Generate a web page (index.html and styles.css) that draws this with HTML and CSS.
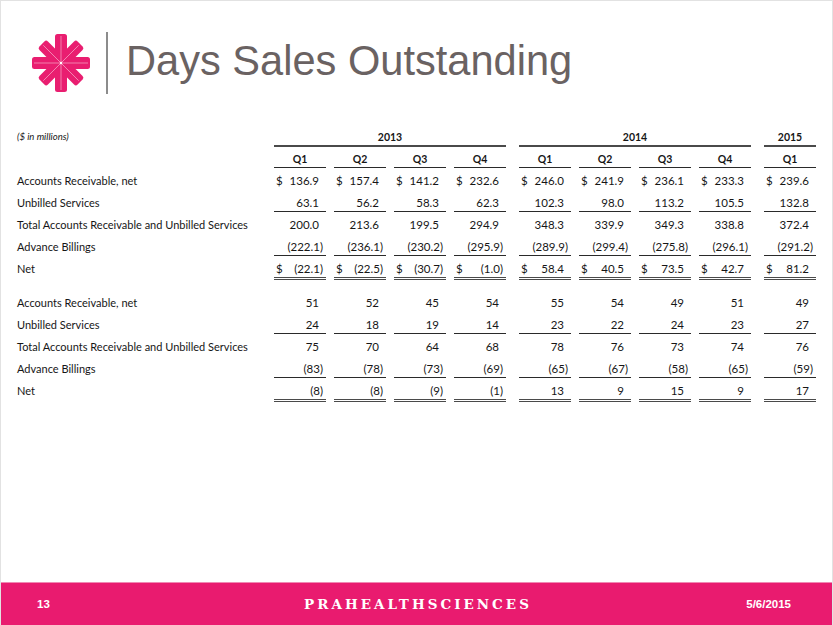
FILE: index.html
```html
<!DOCTYPE html>
<html lang="en">
<head>
<meta charset="utf-8">
<title>Days Sales Outstanding</title>
<link rel="stylesheet" href="styles.css">
</head>
<body>
<div class="slide">
  <header class="head">
    <svg class="logo" viewBox="0 0 58 58" aria-hidden="true">
      <g fill="#e91e70">
        <rect x="23" y="0" width="12" height="58" rx="2.5"/>
        <rect x="23" y="0" width="12" height="58" rx="2.5" transform="rotate(90 29 29)"/>
        <rect x="23" y="2" width="12" height="54" rx="2.5" transform="rotate(45 29 29)"/>
        <rect x="23" y="2" width="12" height="54" rx="2.5" transform="rotate(-45 29 29)"/>
      </g>
      <g stroke="#ffffff" stroke-opacity="0.55" stroke-width="0.8">
        <line x1="29" y1="2" x2="29" y2="56"/>
        <line x1="2" y1="29" x2="56" y2="29"/>
        <line x1="29" y1="4" x2="29" y2="54" transform="rotate(45 29 29)"/>
        <line x1="29" y1="4" x2="29" y2="54" transform="rotate(-45 29 29)"/>
      </g>
      <circle cx="29" cy="29" r="1.2" fill="#ffffff"/>
    </svg>
    <div class="divider"></div>
    <h1 class="title">Days Sales Outstanding</h1>
  </header>

  <main class="tables">
    <div class="row">
      <div class="label note">($ in millions)</div>
      <div class="cell hd span4 uy">2013</div>
      <div class="cell hd span4 g uy">2014</div>
      <div class="cell hd g uy">2015</div>
    </div>
    <div class="row">
      <div class="label"></div>
      <div class="cell hd ul">Q1</div>
      <div class="cell hd ul">Q2</div>
      <div class="cell hd ul">Q3</div>
      <div class="cell hd ul">Q4</div>
      <div class="cell hd ul g">Q1</div>
      <div class="cell hd ul">Q2</div>
      <div class="cell hd ul">Q3</div>
      <div class="cell hd ul">Q4</div>
      <div class="cell hd ul g">Q1</div>
    </div>

    <div class="row">
      <div class="label">Accounts Receivable, net</div>
      <div class="cell"><span class="cur">$</span><span class="num">136.9</span></div>
      <div class="cell"><span class="cur">$</span><span class="num">157.4</span></div>
      <div class="cell"><span class="cur">$</span><span class="num">141.2</span></div>
      <div class="cell"><span class="cur">$</span><span class="num">232.6</span></div>
      <div class="cell g"><span class="cur">$</span><span class="num">246.0</span></div>
      <div class="cell"><span class="cur">$</span><span class="num">241.9</span></div>
      <div class="cell"><span class="cur">$</span><span class="num">236.1</span></div>
      <div class="cell"><span class="cur">$</span><span class="num">233.3</span></div>
      <div class="cell g"><span class="cur">$</span><span class="num">239.6</span></div>
    </div>
    <div class="row">
      <div class="label">Unbilled Services</div>
      <div class="cell ul"><span class="num">63.1</span></div>
      <div class="cell ul"><span class="num">56.2</span></div>
      <div class="cell ul"><span class="num">58.3</span></div>
      <div class="cell ul"><span class="num">62.3</span></div>
      <div class="cell ul g"><span class="num">102.3</span></div>
      <div class="cell ul"><span class="num">98.0</span></div>
      <div class="cell ul"><span class="num">113.2</span></div>
      <div class="cell ul"><span class="num">105.5</span></div>
      <div class="cell ul g"><span class="num">132.8</span></div>
    </div>
    <div class="row">
      <div class="label">Total Accounts Receivable and Unbilled Services</div>
      <div class="cell"><span class="num">200.0</span></div>
      <div class="cell"><span class="num">213.6</span></div>
      <div class="cell"><span class="num">199.5</span></div>
      <div class="cell"><span class="num">294.9</span></div>
      <div class="cell g"><span class="num">348.3</span></div>
      <div class="cell"><span class="num">339.9</span></div>
      <div class="cell"><span class="num">349.3</span></div>
      <div class="cell"><span class="num">338.8</span></div>
      <div class="cell g"><span class="num">372.4</span></div>
    </div>
    <div class="row">
      <div class="label">Advance Billings</div>
      <div class="cell ul"><span class="num neg">(222.1)</span></div>
      <div class="cell ul"><span class="num neg">(236.1)</span></div>
      <div class="cell ul"><span class="num neg">(230.2)</span></div>
      <div class="cell ul"><span class="num neg">(295.9)</span></div>
      <div class="cell ul g"><span class="num neg">(289.9)</span></div>
      <div class="cell ul"><span class="num neg">(299.4)</span></div>
      <div class="cell ul"><span class="num neg">(275.8)</span></div>
      <div class="cell ul"><span class="num neg">(296.1)</span></div>
      <div class="cell ul g"><span class="num neg">(291.2)</span></div>
    </div>
    <div class="row">
      <div class="label">Net</div>
      <div class="cell dbl"><span class="cur">$</span><span class="num neg">(22.1)</span></div>
      <div class="cell dbl"><span class="cur">$</span><span class="num neg">(22.5)</span></div>
      <div class="cell dbl"><span class="cur">$</span><span class="num neg">(30.7)</span></div>
      <div class="cell dbl"><span class="cur">$</span><span class="num neg">(1.0)</span></div>
      <div class="cell dbl g"><span class="cur">$</span><span class="num">58.4</span></div>
      <div class="cell dbl"><span class="cur">$</span><span class="num">40.5</span></div>
      <div class="cell dbl"><span class="cur">$</span><span class="num">73.5</span></div>
      <div class="cell dbl"><span class="cur">$</span><span class="num">42.7</span></div>
      <div class="cell dbl g"><span class="cur">$</span><span class="num">81.2</span></div>
    </div>

    <div class="row first">
      <div class="label">Accounts Receivable, net</div>
      <div class="cell"><span class="num">51</span></div>
      <div class="cell"><span class="num">52</span></div>
      <div class="cell"><span class="num">45</span></div>
      <div class="cell"><span class="num">54</span></div>
      <div class="cell g"><span class="num">55</span></div>
      <div class="cell"><span class="num">54</span></div>
      <div class="cell"><span class="num">49</span></div>
      <div class="cell"><span class="num">51</span></div>
      <div class="cell g"><span class="num">49</span></div>
    </div>
    <div class="row">
      <div class="label">Unbilled Services</div>
      <div class="cell ul"><span class="num">24</span></div>
      <div class="cell ul"><span class="num">18</span></div>
      <div class="cell ul"><span class="num">19</span></div>
      <div class="cell ul"><span class="num">14</span></div>
      <div class="cell ul g"><span class="num">23</span></div>
      <div class="cell ul"><span class="num">22</span></div>
      <div class="cell ul"><span class="num">24</span></div>
      <div class="cell ul"><span class="num">23</span></div>
      <div class="cell ul g"><span class="num">27</span></div>
    </div>
    <div class="row">
      <div class="label">Total Accounts Receivable and Unbilled Services</div>
      <div class="cell"><span class="num">75</span></div>
      <div class="cell"><span class="num">70</span></div>
      <div class="cell"><span class="num">64</span></div>
      <div class="cell"><span class="num">68</span></div>
      <div class="cell g"><span class="num">78</span></div>
      <div class="cell"><span class="num">76</span></div>
      <div class="cell"><span class="num">73</span></div>
      <div class="cell"><span class="num">74</span></div>
      <div class="cell g"><span class="num">76</span></div>
    </div>
    <div class="row">
      <div class="label">Advance Billings</div>
      <div class="cell ul"><span class="num neg">(83)</span></div>
      <div class="cell ul"><span class="num neg">(78)</span></div>
      <div class="cell ul"><span class="num neg">(73)</span></div>
      <div class="cell ul"><span class="num neg">(69)</span></div>
      <div class="cell ul g"><span class="num neg">(65)</span></div>
      <div class="cell ul"><span class="num neg">(67)</span></div>
      <div class="cell ul"><span class="num neg">(58)</span></div>
      <div class="cell ul"><span class="num neg">(65)</span></div>
      <div class="cell ul g"><span class="num neg">(59)</span></div>
    </div>
    <div class="row">
      <div class="label">Net</div>
      <div class="cell dbl"><span class="num neg">(8)</span></div>
      <div class="cell dbl"><span class="num neg">(8)</span></div>
      <div class="cell dbl"><span class="num neg">(9)</span></div>
      <div class="cell dbl"><span class="num neg">(1)</span></div>
      <div class="cell dbl g"><span class="num">13</span></div>
      <div class="cell dbl"><span class="num">9</span></div>
      <div class="cell dbl"><span class="num">15</span></div>
      <div class="cell dbl"><span class="num">9</span></div>
      <div class="cell dbl g"><span class="num">17</span></div>
    </div>
  </main>

  <footer class="foot">
    <span class="page">13</span>
    <span class="brand">PRAHEALTHSCIENCES</span>
    <span class="date">5/6/2015</span>
  </footer>
</div>
</body>
</html>
```

FILE: styles.css
```css
body {
  margin: 0;
  background: #ffffff;
}

.slide {
  width: 833px;
  height: 625px;
  box-sizing: border-box;
  border: 1px solid #e2e2e2;
  border-bottom: 0;
  display: flex;
  flex-direction: column;
  background: #ffffff;
  font-family: Lato, "Open Sans", sans-serif;
  color: #161616;
}

/* header */
.head {
  display: flex;
  align-items: center;
  height: 62px;
  margin-top: 31px;
  padding-left: 31px;
}

.logo {
  width: 58px;
  height: 58px;
  flex: none;
}

.divider {
  width: 2px;
  height: 62px;
  background: #8c8c8c;
  margin-left: 16px;
  flex: none;
}

.title {
  margin: 0 0 4px 18px;
  font-family: "Liberation Sans", Arial, sans-serif;
  font-weight: 400;
  font-size: 41.6px;
  line-height: 1;
  color: #6a6262;
}

/* tables */
.tables {
  flex: 1;
  margin-top: 35px;
  padding-left: 16px;
}

.row {
  display: flex;
  align-items: flex-start;
  height: 22px;
}

.row.first {
  margin-top: 12px;
}

.label {
  width: 249px;
  flex: none;
  font-size: 11px;
  line-height: 16px;
  white-space: nowrap;
}

.note {
  font-style: italic;
  font-size: 9.5px;
}

.cell {
  width: 52px;
  flex: none;
  margin-left: 8px;
  display: flex;
  font-size: 11.5px;
  line-height: 16px;
  border-bottom: 1px solid transparent;
  white-space: nowrap;
}

.cell.g {
  margin-left: 13px;
}

.cell.span4 {
  width: 232px;
}

.hd {
  justify-content: center;
  font-weight: 700;
  font-size: 10.5px;
}

.ul {
  border-bottom: 1px solid #2a2a2a;
}

.uy {
  border-bottom: 2px solid #4a4a4a;
}

.dbl {
  border-bottom: 3px double #4a4a4a;
}

.cur {
  padding-left: 2px;
}

.num {
  margin-left: auto;
  padding-right: 7px;
}

.num.neg {
  padding-right: 3px;
}

/* footer */
.foot {
  height: 43px;
  flex: none;
  background: #e91b6f;
  border-top: 1px solid #f08ab3;
  box-sizing: border-box;
  display: grid;
  grid-template-columns: 1fr auto 1fr;
  align-items: center;
  padding: 0 41px 0 36px;
  color: #ffffff;
}

.page,
.date {
  font-family: "Liberation Sans", Arial, sans-serif;
  font-weight: 700;
  font-size: 11.5px;
}

.date {
  justify-self: end;
}

.brand {
  font-family: "DejaVu Serif", serif;
  font-weight: 700;
  font-size: 13.5px;
  letter-spacing: 3px;
  padding-left: 8px;
}
```
